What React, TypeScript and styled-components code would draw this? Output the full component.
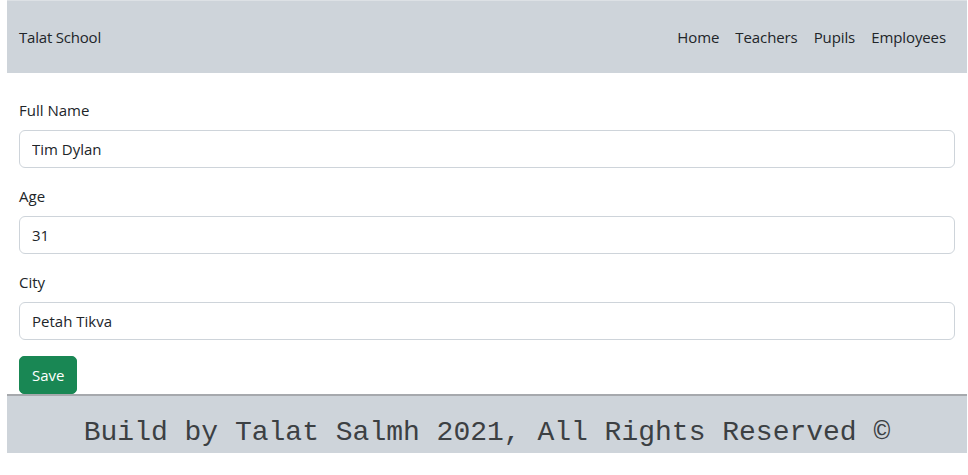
import React from 'react';
import styled, { createGlobalStyle } from 'styled-components';

const GlobalStyle = createGlobalStyle`
  html, body {
    margin: 0;
    padding: 0;
    background: #fff;
  }
  body {
    font-family: "Open Sans", "Noto Sans", sans-serif;
    font-size: 16px;
    color: #212529;
  }
`;

const Page = styled.div`
  width: 960px;
  margin-left: 7px;
`;

const NavBar = styled.nav`
  height: 73px;
  box-sizing: border-box;
  background: #ced4da;
  border-top: 1px solid #dde1e5;
  display: flex;
  align-items: center;
  justify-content: space-between;
  padding: 0 12px;
`;

const Brand = styled.a`
  font-size: 15px;
  color: #212529;
  letter-spacing: -0.2px;
`;

const NavLinks = styled.ul`
  display: flex;
  list-style: none;
  margin: 0;
  padding: 0 1px 0 0;
`;

const NavLink = styled.li`
  padding: 0 8px;
  font-size: 15px;
  letter-spacing: -0.1px;
  color: #212529;
`;

const Form = styled.form`
  padding: 25px 12px 0;
`;

const Field = styled.div`
  margin-bottom: 16px;
`;

const Label = styled.label`
  display: block;
  font-size: 15px;
  line-height: 24px;
  margin-bottom: 8px;
`;

const Input = styled.input`
  display: block;
  width: 100%;
  box-sizing: border-box;
  height: 38px;
  padding: 6px 12px;
  font-family: inherit;
  font-size: 15px;
  color: #212529;
  border: 1px solid #ced4da;
  border-radius: 6px;
  background: #fff;
  outline: none;
`;

const SaveButton = styled.button`
  display: block;
  height: 38px;
  padding: 6px 12px;
  font-family: inherit;
  font-size: 15px;
  color: #fff;
  background: #198754;
  border: 1px solid #198754;
  border-radius: 5px;
  cursor: pointer;
`;

const Footer = styled.footer`
  height: 59px;
  box-sizing: border-box;
  background: #ced4da;
  border-top: 2px solid #a6a9ad;
  display: flex;
  align-items: center;
  justify-content: center;
  padding-top: 15px;
  font-family: "Liberation Mono", "Courier New", monospace;
  font-size: 28px;
  color: #3c4043;
`;

const fields = [
  { label: 'Full Name', value: 'Tim Dylan' },
  { label: 'Age', value: '31' },
  { label: 'City', value: 'Petah Tikva' },
];

const App = () => (
  <>
    <GlobalStyle />
    <Page>
      <NavBar>
        <Brand>Talat School</Brand>
        <NavLinks>
          {['Home', 'Teachers', 'Pupils', 'Employees'].map(link => (
            <NavLink key={link}>{link}</NavLink>
          ))}
        </NavLinks>
      </NavBar>
      <Form onSubmit={e => e.preventDefault()}>
        {fields.map(field => (
          <Field key={field.label}>
            <Label>{field.label}</Label>
            <Input defaultValue={field.value} />
          </Field>
        ))}
        <SaveButton type="submit">Save</SaveButton>
      </Form>
      <Footer>Build by Talat Salmh 2021, All Rights Reserved ©</Footer>
    </Page>
  </>
);

export default App;
